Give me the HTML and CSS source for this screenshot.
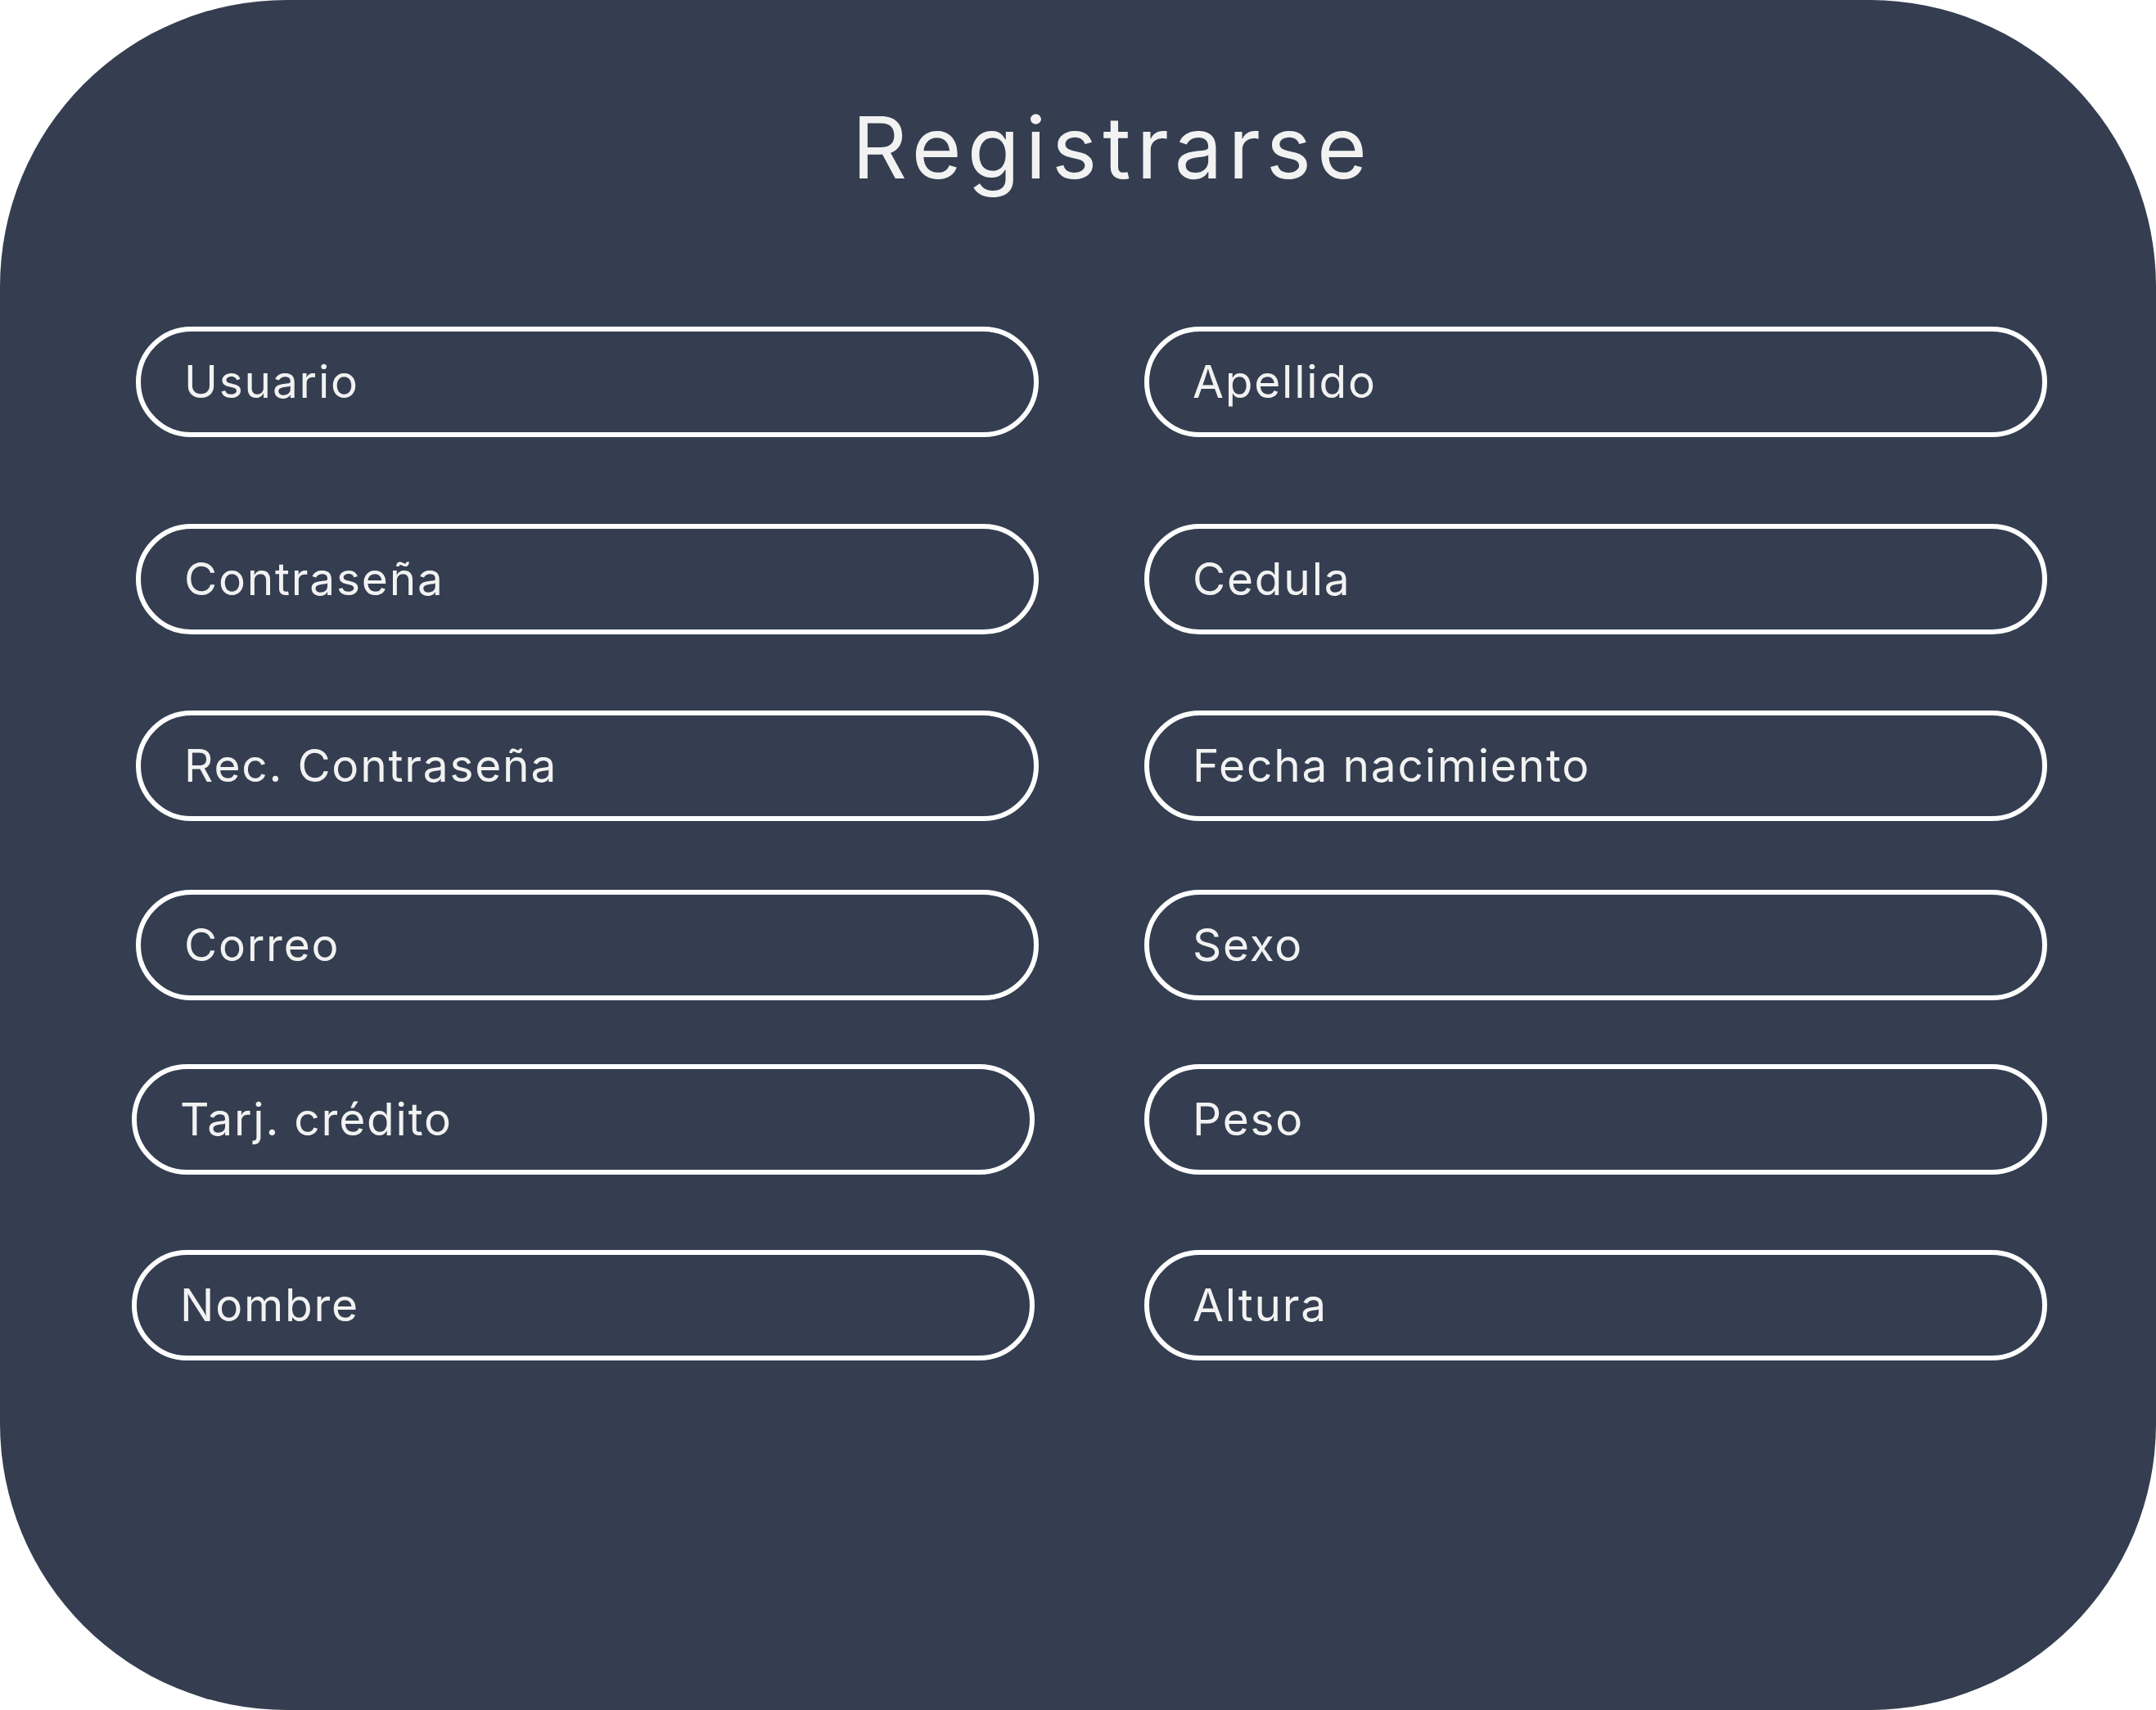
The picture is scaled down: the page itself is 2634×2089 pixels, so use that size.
FILE: index.html
```html
<!DOCTYPE html>
<html lang="es">
<head>
<meta charset="utf-8">
<title>Registrarse</title>
<link rel="stylesheet" href="styles.css">
</head>
<body>
<main class="card">
  <h1 class="title">Registrarse</h1>
  <div class="form">
    <div class="row row-1">
      <div class="field">Usuario</div>
      <div class="field">Apellido</div>
    </div>
    <div class="row row-2">
      <div class="field">Contraseña</div>
      <div class="field">Cedula</div>
    </div>
    <div class="row row-3">
      <div class="field">Rec. Contraseña</div>
      <div class="field">Fecha nacimiento</div>
    </div>
    <div class="row row-4">
      <div class="field">Correo</div>
      <div class="field">Sexo</div>
    </div>
    <div class="row row-5 row-shift">
      <div class="field">Tarj. crédito</div>
      <div class="field">Peso</div>
    </div>
    <div class="row row-6 row-shift">
      <div class="field">Nombre</div>
      <div class="field">Altura</div>
    </div>
  </div>
</main>
</body>
</html>
```

FILE: styles.css
```css
* { box-sizing: border-box; }

html, body {
  margin: 0;
  padding: 0;
  background: #ffffff;
}

.card {
  width: 2634px;
  height: 2089px;
  background: #343e50;
  border-radius: 350px;
  padding: 128px 0 0 166px;
  font-family: Inter, "Liberation Sans", sans-serif;
  color: #f2f2f2;
  overflow: hidden;
}

.title {
  margin: 0 0 0 -166px;
  padding-left: 84px;
  text-align: center;
  font-size: 104.5px;
  line-height: 1;
  font-weight: 400;
  letter-spacing: 7px;
  color: #f2f2f2;
}

.form {
  display: flex;
  flex-direction: column;
  margin-top: 166px;
}

.row {
  display: flex;
  gap: 129px;
}

.row-2 { margin-top: 106px; }
.row-3 { margin-top: 93px; }
.row-4 { margin-top: 84px; }
.row-5 { margin-top: 78px; }
.row-6 { margin-top: 92px; }

.row-shift .field:first-child {
  margin-left: -5px;
  margin-right: 5px;
}

.field {
  width: 1103px;
  height: 135px;
  border: 6px solid #ffffff;
  border-radius: 68px;
  display: flex;
  align-items: center;
  padding-left: 53px;
  font-size: 55px;
  line-height: 1;
  letter-spacing: 1.8px;
  color: #f2f2f2;
}
```
